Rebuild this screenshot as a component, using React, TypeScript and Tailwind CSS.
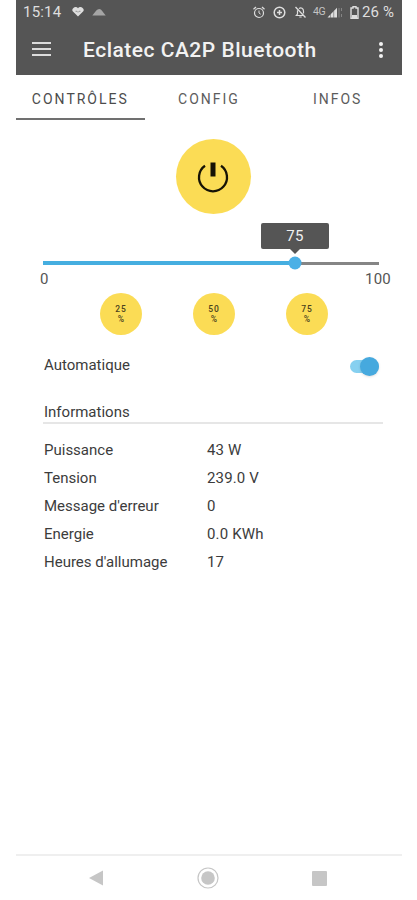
import clsx from "clsx";
import { useState } from "react";

const TABS = ["CONTRÔLES", "CONFIG", "INFOS"];

const PRESETS = [25, 50, 75];

const INFORMATIONS = [
  { label: "Puissance", value: "43 W" },
  { label: "Tension", value: "239.0 V" },
  { label: "Message d'erreur", value: "0" },
  { label: "Energie", value: "0.0 KWh" },
  { label: "Heures d'allumage", value: "17" },
];

function StatusBar() {
  return (
    <div className="flex h-6 items-center pl-[7px] pr-[8px] text-[#dedede]">
      <span className="text-[15px] leading-6 tracking-[0.2px]">15:14</span>
      <svg className="ml-[11px]" width="12" height="10" viewBox="0 0 12 10">
        <path
          d="M6 9.5 1.2 4.8A2.5 2.5 0 0 1 1.4 1.1 3 3 0 0 1 6 1.3a3 3 0 0 1 4.6-.2 2.5 2.5 0 0 1 .2 3.700Z"
          fill="currentColor"
        />
        <path d="M3.500 4.300h1.500l1 1 1-1h1.500" fill="none" stroke="#888" strokeWidth="0.8" />
      </svg>
      <svg className="ml-[8px]" width="14" height="8" viewBox="0 0 14 8">
        <path d="M.3 7.500 4.300 2.500Q5.500 1 7.300 1T10 2.700L13.700 7.500Z" fill="#a5a5a5" />
      </svg>
      <div className="ml-auto flex items-center">
        <svg width="12" height="13" viewBox="0 0 12 13" fill="none" stroke="currentColor">
          <circle cx="6" cy="7" r="4.500" strokeWidth="1.2" />
          <path d="M6 4.5V7l1.7 1.2" />
          <path d="M.5 3.200 3 1M11.500 3.200 9 1" strokeWidth="1.300" />
        </svg>
        <svg className="ml-[8px]" width="13" height="13" viewBox="0 0 13 13" fill="none" stroke="currentColor">
          <circle cx="6.5" cy="6.5" r="5.3" strokeWidth="1.5" />
          <path d="M6.5 4v5M4 6.5h5" strokeWidth="1.5" />
        </svg>
        <svg className="ml-[8px]" width="13" height="12" viewBox="0 0 12 12" fill="none" stroke="currentColor">
          <path d="M1 1l10 10.5" strokeWidth="1.3" />
          <path d="M3 4.2V8L1.8 9.5H9M4.5 2.6C6.5 1 9 2.5 9 5v2.5" strokeWidth="1.200" />
          <path d="M4.8 11h2.4" />
        </svg>
        <span className="ml-[6px] w-[14px] text-[10.5px] leading-3 tracking-[-0.5px] text-[#c4c4c4]">4G</span>
        <svg width="16" height="11" viewBox="0 0 16 11">
          <path d="M.5 10.5 10 .8V10.5Z" fill="#dedede" />
          <path d="M3.5 7v4M6.700 4v7" stroke="#666" strokeWidth="0.6" />
          <path d="M12 1v9.5M14.5 1v3M14.5 7v3" stroke="#858585" />
        </svg>
        <svg className="ml-[7px]" width="9" height="13" viewBox="0 0 9 13">
          <path d="M3 .7h3V2h2v10.300H1V2h2Z" fill="none" stroke="currentColor" strokeWidth="1.4" />
          <path d="M2 9h5v3H2Z" fill="currentColor" />
        </svg>
        <span className="ml-[3px] whitespace-nowrap text-[15px] leading-6 tracking-[0.1px]">26 %</span>
      </div>
    </div>
  );
}

function AppBar() {
  return (
    <div className="flex h-[51px] items-center pl-[16px] pr-[19px] text-[#f2f2f2]">
      <button className="-mt-px flex w-[19px] flex-col gap-[4px]" aria-label="Menu">
        <span className="h-[2px] w-full bg-[#dcdcdc]" />
        <span className="h-[2px] w-full bg-[#dcdcdc]" />
        <span className="h-[2px] w-full bg-[#dcdcdc]" />
      </button>
      <h1 className="ml-[32px] whitespace-nowrap pt-[2px] text-[21px] font-medium leading-[49px] tracking-[0.5px]">
        Eclatec CA2P Bluetooth
      </h1>
      <button className="ml-auto flex flex-col gap-[2px]" aria-label="Options">
        <span className="size-[4px] rounded-full bg-[#f2f2f2]" />
        <span className="size-[4px] rounded-full bg-[#f2f2f2]" />
        <span className="size-[4px] rounded-full bg-[#f2f2f2]" />
      </button>
    </div>
  );
}

function Tabs() {
  const [active, setActive] = useState(0);
  return (
    <div className="grid h-[45px] grid-cols-3">
      {TABS.map((tab, i) => (
        <button
          key={tab}
          onClick={() => setActive(i)}
          className={clsx(
            "border-b-2 pt-[5px] text-[14px] tracking-[2px]",
            i === active ? "border-[#707070] text-[#4c4c4c]" : "border-transparent text-[#5c5c5c]"
          )}
        >
          {tab}
        </button>
      ))}
    </div>
  );
}

function Slider({ value }: { value: number }) {
  return (
    <div className="mt-[47px] w-[336px]">
      <div className="relative flex h-[4px] items-center">
        <div className="h-[4px] bg-[#45aee0]" style={{ width: `${value}%` }} />
        <div className="h-[3px] flex-1 bg-[#858585]" />
        <div
          className="absolute top-1/2 size-[13px] -translate-x-1/2 -translate-y-1/2 rounded-full bg-[#4bb0e6]"
          style={{ left: `${value}%` }}
        />
        <div
          className="absolute bottom-[16px] h-[26px] w-[68px] -translate-x-1/2 rounded-[2px] bg-[#555] text-center text-[15px] leading-[27px] tracking-[0.4px] text-[#f0f0f0]"
          style={{ left: `${value}%` }}
        >
          {value}
          <svg className="absolute left-[29px] top-full" width="10" height="5" viewBox="0 0 10 5">
            <path d="M0 0h10L5 5Z" fill="#555" />
          </svg>
        </div>
      </div>
      <div className="-ml-[3px] -mr-[12px] mt-[4px] flex justify-between text-[15px] leading-5 tracking-[0.2px] text-[#555]">
        <span>0</span>
        <span>100</span>
      </div>
    </div>
  );
}

function Switch() {
  const [on, setOn] = useState(true);
  return (
    <button
      role="switch"
      aria-checked={on}
      aria-label="Automatique"
      onClick={() => setOn(!on)}
      className={clsx(
        "mr-[4px] mt-[3px] flex h-[13px] w-[29px] items-center rounded-full",
        on ? "justify-end bg-[#86d0f0]" : "bg-gray-300"
      )}
    >
      <span
        className={clsx("size-[19px] shrink-0 rounded-full shadow-sm", on ? "bg-[#46a9de]" : "bg-gray-100")}
      />
    </button>
  );
}

function NavBar() {
  return (
    <div className="mt-auto flex h-[46px] items-center border-t-2 border-[#efefef] pl-[73px] text-[#c6c6c6]">
      <svg width="14" height="16" viewBox="0 0 14 16">
        <path d="M14 .5v15L0 8Z" fill="currentColor" />
      </svg>
      <svg className="ml-[94px]" width="22" height="22" viewBox="0 0 22 22">
        <circle cx="11" cy="11" r="10" fill="none" stroke="currentColor" strokeWidth="1.2" />
        <circle cx="11" cy="11" r="6.8" fill="currentColor" />
      </svg>
      <span className="ml-[93px] size-[15px] rounded-[1px] bg-[#c6c6c6]" />
    </div>
  );
}

export default function App() {
  return (
    <div className="h-[900px] w-[417px] bg-white pl-[16px] pr-[15px] font-['Roboto',sans-serif]">
      <div className="flex h-full flex-col">
        <header className="bg-[#555]">
          <StatusBar />
          <AppBar />
        </header>
        <Tabs />

        <main className="pl-[27px] pr-[19px] pt-[19px]">
          <button
            className="mx-auto flex size-[75px] items-center justify-center rounded-full bg-[#fbdc55]"
            aria-label="Allumer"
          >
            <svg width="34" height="34" viewBox="0 0 34 34" fill="none" stroke="#161305">
              <path d="M9 5.8A14 14 0 1 0 25 5.8" strokeWidth="2.3" />
              <path d="M17 2.5v14" strokeWidth="5" />
            </svg>
          </button>

          <Slider value={75} />

          <div className="mt-[4px] flex justify-between pl-[57px] pr-[55px]">
            {PRESETS.map((preset) => (
              <button
                key={preset}
                className="flex size-[42px] flex-col items-center justify-center rounded-full bg-[#fbdc55] text-[8.5px] font-medium leading-[10px] text-[#4a421d]"
              >
                <span className="tracking-[1px]">{preset}</span>
                <span>%</span>
              </button>
            ))}
          </div>

          <div className="mt-[20px] flex h-5 items-center justify-between pl-px text-[15px] text-[#3c3c3c]">
            <span>Automatique</span>
            <Switch />
          </div>

          <h2 className="mt-[27px] border-b-2 border-[#e6e6e6] pl-px text-[15px] leading-5 text-[#3c3c3c]">
            Informations
          </h2>

          <dl className="mt-[12px] pl-px text-[15px] text-[#3c3c3c]">
            {INFORMATIONS.map(({ label, value }) => (
              <div key={label} className="flex h-[28.15px] items-center">
                <dt className="w-[163px]">{label}</dt>
                <dd className="tracking-[0.15px]">{value}</dd>
              </div>
            ))}
          </dl>
        </main>

        <NavBar />
      </div>
    </div>
  );
}
